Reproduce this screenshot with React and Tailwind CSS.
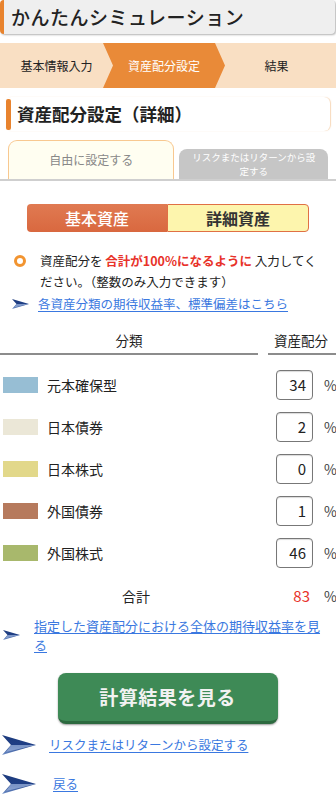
import React from "react";

const font = { fontFamily: '"Noto Sans CJK JP", "Noto Sans", sans-serif' };

function Arrow({ w = 19, h = 10 }) {
  return (
    <svg width={w} height={h} viewBox="0 0 34 20" className="shrink-0">
      <defs>
        <linearGradient id="ag" x1="0" y1="0" x2="0" y2="1">
          <stop offset="0" stopColor="#1c3a7c" />
          <stop offset="0.5" stopColor="#1f3f86" />
          <stop offset="1" stopColor="#6f8fc8" />
        </linearGradient>
      </defs>
      <polygon points="0,0 34,10 0,20 9,10" fill="url(#ag)" />
      <polygon points="9,10 34,10 4,17" fill="#9fb7e0" opacity="0.7" />
    </svg>
  );
}

const rows = [
  { c: "#97bed4", label: "元本確保型", v: "34" },
  { c: "#ebe7d7", label: "日本債券", v: "2" },
  { c: "#e2d88a", label: "日本株式", v: "0" },
  { c: "#b67a5d", label: "外国債券", v: "1" },
  { c: "#a8b86c", label: "外国株式", v: "46" },
];

export default function App() {
  return (
    <div className="w-[336px] bg-white text-[#222]" style={font}>
      {/* header */}
      <div className="h-[34px] mr-[1px] flex items-center rounded-[4px] bg-[#efefef] border-l-[4px] border-[#e8832e] shadow-[1px_1px_2px_rgba(0,0,0,0.3)] pl-[7px] text-[19px] font-medium tracking-[0.5px]">
        かんたんシミュレーション
      </div>

      {/* steps */}
      <div className="mt-[9px] h-[45px] flex bg-[#f9dfc3] text-[12px]">
        <div className="w-[103px] flex items-center justify-center pl-[10px]">基本情報入力</div>
        <div className="w-[122px] flex items-center justify-center bg-[#e98a38] text-white [clip-path:polygon(0_0,112px_0,122px_50%,112px_100%,0_100%,10px_50%)]">
          資産配分設定
        </div>
        <div className="flex-1 flex items-center justify-center pr-[8px]">結果</div>
      </div>

      {/* heading */}
      <div className="mt-[9px] mx-[5px] mr-[6px] h-[34px] flex items-center rounded-[6px] shadow-[1px_0_1px_rgba(240,180,120,0.5)]">
        <div className="w-[5px] h-[31px] ml-[1px] bg-[#e8832e] rounded-[2px]" />
        <div className="pl-[6px] text-[17.5px] font-bold">資産配分設定（詳細）</div>
      </div>

      {/* tabs */}
      <div className="mt-[9px] flex items-end gap-[5px] px-[8px] border-b-[2px] border-[#cfcfcf]">
        <div className="w-[167px] h-[39px] flex items-center justify-center rounded-t-[9px] border border-b-0 border-[#f8c890] bg-[#fffef1] text-[12px] text-[#888]">
          自由に設定する
        </div>
        <div className="w-[149px] h-[30px] flex flex-col items-center justify-center rounded-t-[8px] bg-[#c6c6c6] text-[9.5px] leading-[14px] text-white">
          <span>リスクまたはリターンから設</span>
          <span>定する</span>
        </div>
      </div>

      {/* asset toggles */}
      <div className="mt-[23px] flex px-[27px] h-[28px]">
        <div className="w-[141px] flex items-center justify-center rounded-l-[4px] bg-gradient-to-b from-[#e07a52] to-[#d9683f] text-white text-[16px] font-medium">
          基本資産
        </div>
        <div className="w-[143px] flex items-center justify-center rounded-r-[4px] border-[1.5px] border-[#e07045] bg-[#fdf5ad] text-[16px] font-bold text-[#333]">
          詳細資産
        </div>
      </div>

      {/* info */}
      <div className="mt-[18px] flex px-[14px] text-[12.5px] leading-[21px]">
        <div className="w-[12px] h-[12px] mt-[5px] rounded-full border-[3.5px] border-[#f29430] shrink-0" />
        <p className="pl-[14px] pr-[2px]">
          資産配分を <span className="text-[#e8322a] font-bold">合計が100%になるように</span> 入力してください。（整数のみ入力できます）
        </p>
      </div>

      <div className="mt-[3px] flex items-center pl-[11px] gap-[8px] text-[12.5px]">
        <Arrow w={19} h={10} />
        <span className="text-[#3a78e0] underline underline-offset-[2px]">各資産分類の期待収益率、標準偏差はこちら</span>
      </div>

      {/* table header */}
      <div className="mt-[16px] flex text-[13.5px]">
        <div className="w-[258px] text-center border-b-[2px] border-[#8c8c8c] pb-[3px] pr-[0px]">分類</div>
        <div className="ml-[10px] flex-1 border-b-[2px] border-[#8c8c8c] pb-[3px] pl-[6px]">資産配分</div>
      </div>

      {/* rows */}
      <div className="mt-[15px] flex flex-col gap-[12px]">
        {rows.map((r) => (
          <div key={r.label} className="flex items-center h-[30px]">
            <div className="w-[35px] h-[16px] ml-[3px]" style={{ background: r.c }} />
            <div className="ml-[9px] text-[14px] flex-1">{r.label}</div>
            <div className="w-[37px] h-[30px] rounded-[4px] border border-[#777] flex items-center justify-end pr-[6px] text-[15px] shadow-[inset_0_1px_1px_rgba(0,0,0,0.15)]">
              {r.v}
            </div>
            <div className="w-[23px] pl-[11px] text-[14px] text-[#444]">%</div>
          </div>
        ))}
      </div>

      {/* total */}
      <div className="mt-[18px] flex items-center h-[20px] text-[14px]">
        <div className="w-[122px]" />
        <div className="flex-1">合計</div>
        <div className="w-[37px] text-right pr-[3px] text-[15px] text-[#e8322a]">83</div>
        <div className="w-[23px] pl-[11px] text-[#444]">%</div>
      </div>

      <div className="mt-[10px] flex items-center pl-[2px] text-[13px] leading-[19px]">
        <Arrow w={19} h={10} />
        <span className="ml-[13px] pr-[10px] text-[#3a78e0] underline underline-offset-[2px]">
          指定した資産配分における全体の期待収益率を見る
        </span>
      </div>

      {/* button */}
      <div className="mt-[19px] flex justify-center pr-[1px]">
        <div className="w-[220px] h-[51px] flex items-center justify-center rounded-[8px] bg-[#3e8a56] border-b-[3px] border-[#2c6a3f] shadow-[0_1px_2px_rgba(0,0,0,0.4)] text-[19px] font-bold text-[#f2f2f2] tracking-[0.5px]">
          計算結果を見る
        </div>
      </div>

      <div className="mt-[10px] flex items-center pl-[2px] text-[12.5px] h-[22px]">
        <Arrow w={34} h={20} />
        <span className="ml-[13px] text-[#3a78e0] underline underline-offset-[2px]">リスクまたはリターンから設定する</span>
      </div>

      <div className="mt-[17px] flex items-center pl-[2px] text-[12.5px] h-[22px]">
        <Arrow w={34} h={20} />
        <span className="ml-[17px] text-[#3a78e0] underline underline-offset-[2px]">戻る</span>
      </div>
    </div>
  );
}
